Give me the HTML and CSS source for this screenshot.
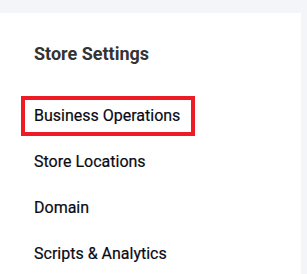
FILE: index.html
```html
<!DOCTYPE html>
<html lang="en">
<head>
    <meta charset="UTF-8">
    <meta name="viewport" content="width=device-width, initial-scale=1.0">
    <title>Store Settings</title>
    <link rel="stylesheet" href="styles.css">
</head>
<body>
    <div class="settings-card">
        <h2 class="settings-title">Store Settings</h2>
        <ul class="settings-menu">
            <li class="menu-item active">Business Operations</li>
            <li class="menu-item">Store Locations</li>
            <li class="menu-item">Domain</li>
            <li class="menu-item">Scripts &amp; Analytics</li>
        </ul>
    </div>
</body>
</html>
```
FILE: styles.css
```css
body {
    font-family: Roboto, 'Liberation Sans', sans-serif;
    background-color: #f4f5f9;
    margin: 0;
}
.settings-card {
    background-color: #fff;
    width: 301px;
    height: 261px;
    margin-top: 13px;
    box-sizing: border-box;
    padding-top: 30px;
}
.settings-title {
    font-size: 18px;
    font-weight: 700;
    color: #333;
    margin: 0 0 31px 34px;
    line-height: 22px;
}
.settings-menu {
    list-style: none;
    margin: 0;
    padding: 0;
}
.menu-item {
    font-size: 16px;
    font-weight: 400;
    color: #0a0a14;
    line-height: 32px;
    margin: 0 0 6px 21px;
    padding: 0 9px;
    border: 4px solid transparent;
    width: fit-content;
    -webkit-text-stroke: 0.2px #0a0a14;
}
.menu-item.active {
    border-color: #ed1c24;
    padding-right: 11px;
}
```
